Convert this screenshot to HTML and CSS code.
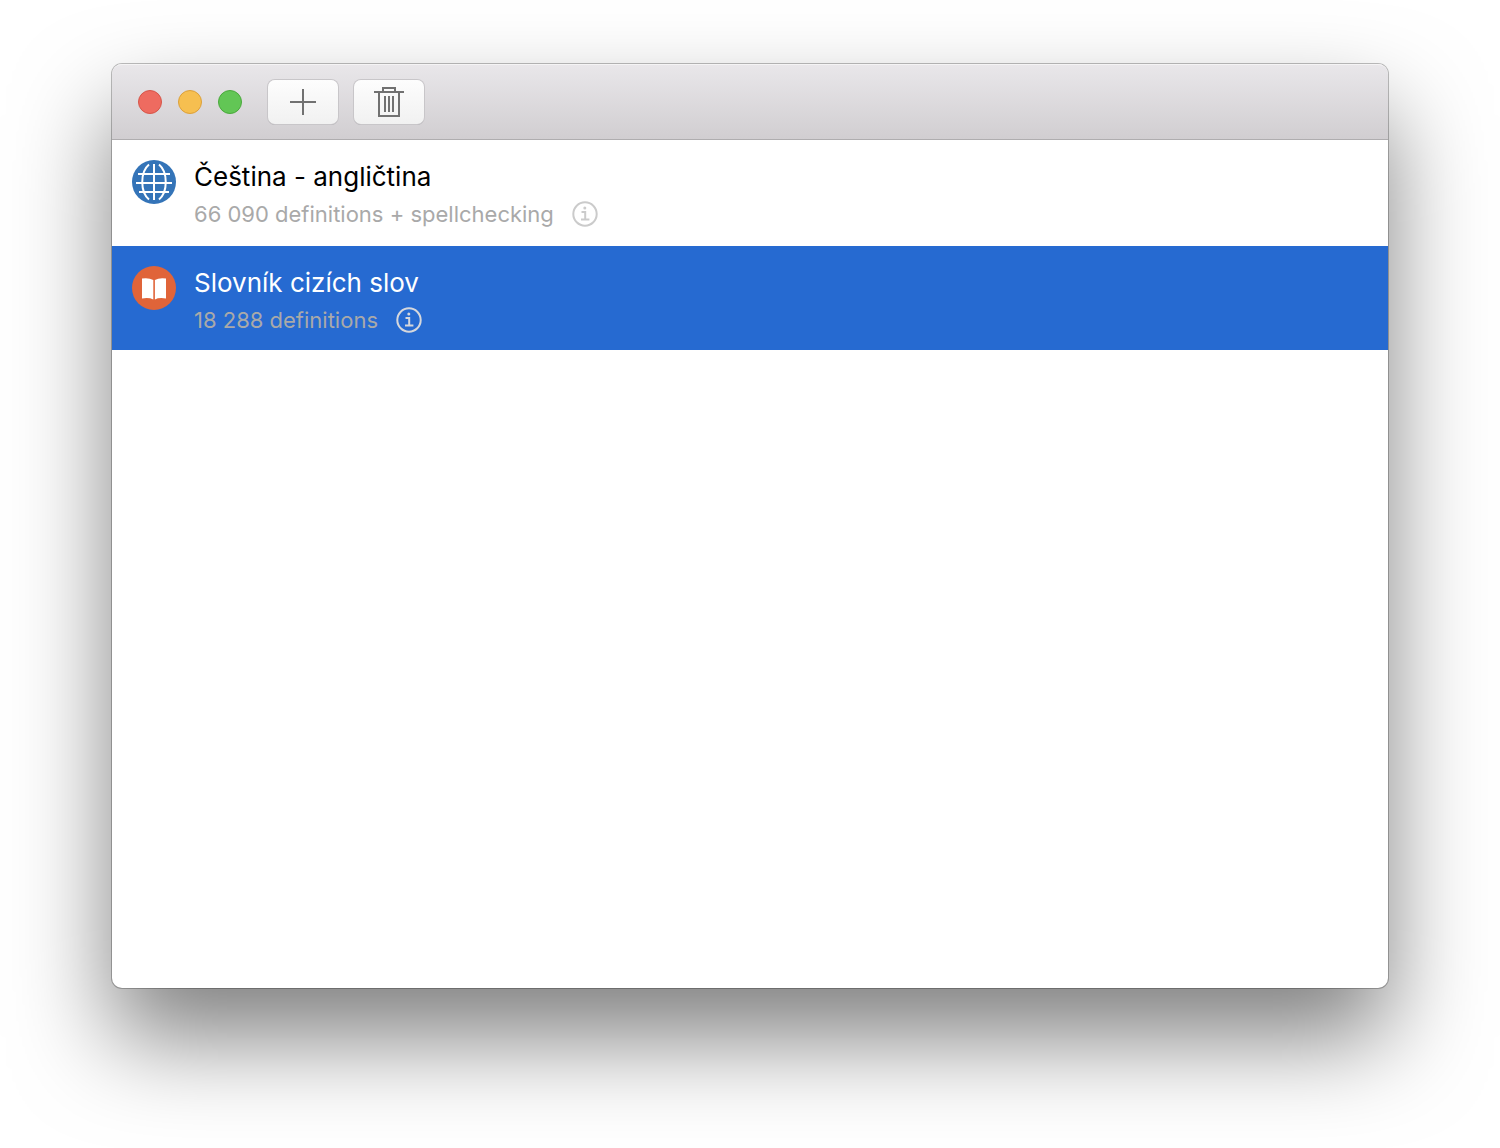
FILE: index.html
```html
<!DOCTYPE html>
<html lang="en">
<head>
<meta charset="utf-8">
<title>Dictionaries</title>
<link rel="stylesheet" href="styles.css">
</head>
<body>
<main class="window">
  <header class="toolbar">
    <div class="lights">
      <button class="light light-close" aria-label="Close"></button>
      <button class="light light-minimize" aria-label="Minimize"></button>
      <button class="light light-zoom" aria-label="Zoom"></button>
    </div>
    <div class="actions">
      <button class="tool" aria-label="Add dictionary">
        <svg width="32" height="32" viewBox="0 0 32 32" fill="none" stroke="#717171" stroke-width="2"><path d="M3 16H29M16 3V29"/></svg>
      </button>
      <button class="tool" aria-label="Delete dictionary">
        <svg width="32" height="32" viewBox="0 0 32 32" fill="none" stroke="#717171" stroke-width="2"><path d="M1 6H31M6 6V30H26V6M10 6V2H22V6M12 10V26M16 10V26M20 10V26"/></svg>
      </button>
    </div>
  </header>
  <ul class="list">
    <li class="row">
      <svg class="badge" viewBox="0 0 44 44" fill="none" stroke="#fff" stroke-width="2"><circle cx="22" cy="22" r="22" fill="#3474b8" stroke="none"/><path d="M22 4V40M4 23H40M6 14H38M7 32H37M17 4.500C8 12 8 32 17 39.500M27 4.500C36 12 36 32 27 39.500"/></svg>
      <div class="text">
        <h2 class="title">Čeština - angličtina</h2>
        <div class="meta">
          <span>66 090 definitions + spellchecking</span>
          <button class="info" aria-label="About Čeština - angličtina">
            <svg width="26" height="26" viewBox="0 0 26 26" fill="none" stroke="currentColor" stroke-width="2"><circle cx="13" cy="13" r="11.7"/><path d="M9.5 11H13.2V18M9 18.4H17.4"/><circle cx="12.8" cy="7" r="1.5" fill="currentColor" stroke="none"/></svg>
          </button>
        </div>
      </div>
    </li>
    <li class="row row-selected">
      <svg class="badge" viewBox="0 0 44 44"><circle cx="22" cy="22" r="22" fill="#e06439"/><path d="M10 12.500Q17 11.500 21.300 14V33.500Q17 31.300 10 32.500ZM34 12.500Q27 11.500 22.900 14V33.500Q27 31.300 34 32.500Z" fill="#fff"/></svg>
      <div class="text">
        <h2 class="title">Slovník cizích slov</h2>
        <div class="meta">
          <span>18 288 definitions</span>
          <button class="info" aria-label="About Slovník cizích slov">
            <svg width="26" height="26" viewBox="0 0 26 26" fill="none" stroke="currentColor" stroke-width="2"><circle cx="13" cy="13" r="11.7"/><path d="M9.5 11H13.2V18M9 18.4H17.4"/><circle cx="12.8" cy="7" r="1.5" fill="currentColor" stroke="none"/></svg>
          </button>
        </div>
      </div>
    </li>
  </ul>
</main>
</body>
</html>
```
FILE: styles.css
```css
* { box-sizing: border-box; }

body {
  margin: 0;
  min-height: 100vh;
  padding: 64px 112px 160px;
  display: flex;
  background: #fff;
  font-family: Inter, "Liberation Sans", sans-serif;
  overflow: hidden;
}

button {
  padding: 0;
  border: 0;
  background: none;
}

.window {
  flex: 1;
  display: flex;
  flex-direction: column;
  background: #fff;
  border-radius: 10px;
  box-shadow: 0 0 0 1px rgba(0, 0, 0, 0.25), 0 50px 96px rgba(0, 0, 0, 0.5);
}

.toolbar {
  display: flex;
  align-items: center;
  gap: 26px;
  height: 76px;
  padding: 0 26px;
  border-radius: 10px 10px 0 0;
  border-bottom: 1px solid #afadaf;
  background: linear-gradient(#e9e7ea, #d1ced1);
  box-shadow: inset 0 2px 0 -1px #f5f4f5;
}

.lights { display: flex; gap: 16px; }

.light {
  width: 24px;
  height: 24px;
  border-radius: 50%;
  border: 1px solid;
}

.light-close { background: #ee6b60; border-color: #d65549; }
.light-minimize { background: #f6bf50; border-color: #dca03a; }
.light-zoom { background: #62c655; border-color: #4aa93c; }

.actions { display: flex; gap: 16px; }

.tool {
  display: flex;
  align-items: center;
  justify-content: center;
  width: 70px;
  height: 44px;
  border-radius: 7px;
  background: linear-gradient(#fdfdfd, #f1f1f1);
  box-shadow: 0 0 0 1px #c8c6c9, 0 1px 0 0 #a3a1a4;
}

.list {
  display: flex;
  flex-direction: column;
  gap: 2px;
  margin: 0;
  padding: 0;
  list-style: none;
}

.row {
  display: flex;
  gap: 18px;
  min-height: 104px;
  padding: 20px 20px 16px;
  color: #000;
}

.row-selected { background: #266ad1; color: #fff; }

.badge { flex: none; width: 44px; height: 44px; }

.text { display: flex; flex-direction: column; gap: 6px; }

.title {
  margin: 0;
  font-size: 26px;
  font-weight: 400;
  line-height: 34px;
}

.meta {
  display: flex;
  align-items: center;
  gap: 18px;
  font-size: 22px;
  line-height: 28px;
  color: #a9a9a9;
}

.info { display: flex; color: #cbcbcb; }

.row-selected .info { color: #d5d7dc; }
```
